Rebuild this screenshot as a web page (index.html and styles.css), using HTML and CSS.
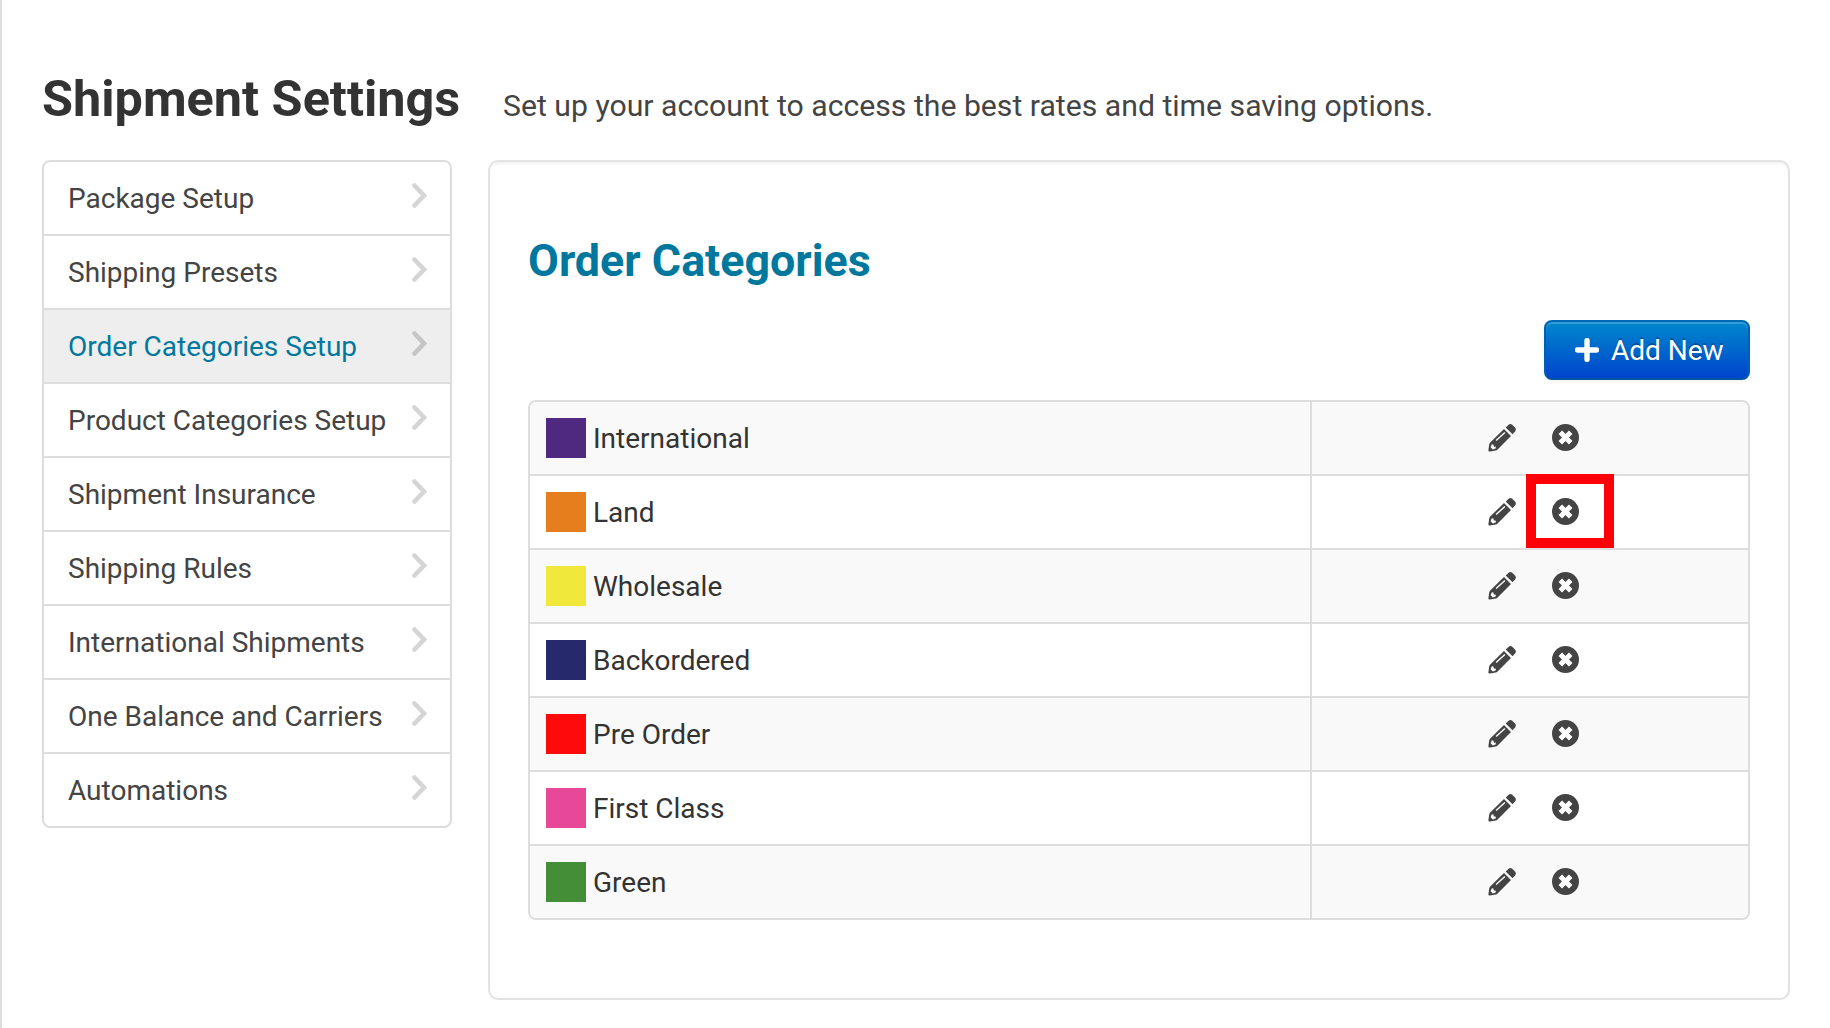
FILE: index.html
```html
<!DOCTYPE html>
<html lang="en">
<head>
  <meta charset="UTF-8" />
  <meta name="viewport" content="width=device-width, initial-scale=1.0"/>
  <title>Shipment Settings</title>
  <link rel="stylesheet" href="styles.css">
</head>
<body>
  <svg class="icon-defs" width="0" height="0">
    <symbol id="icon-chevron" viewBox="0 0 15 25">
      <path d="M2.5 2.5 L12 12.5 L2.5 22.5" fill="none" stroke="currentColor" stroke-width="4.6" stroke-linecap="round" />
    </symbol>
    <symbol id="icon-plus" viewBox="0 0 24 24">
      <path d="M12 2.5V21.5M2.5 12H21.5" fill="none" stroke="currentColor" stroke-width="5.4" stroke-linecap="round" />
    </symbol>
    <symbol id="icon-pencil" viewBox="0 0 28 28">
      <path fill="currentColor" fill-rule="evenodd" d="M16 5 L23 12 L9.6 25.4 Q8.8 26.2 7.8 26.6 L2 27.6 Q.2 27.8 .4 26.2 L1.2 20.6 Q1.4 19.4 2.2 18.6 Z M7.6 16 L8.6 17 L17.4 9 L16.4 8 Z M3.8 20.2 L2.6 23.2 L4.8 25.4 L7.6 24.6 L8 22.8 L5.9 22.6 L5.4 20.4 Z" />
      <path fill="currentColor" d="M17.7 3.5 L20.4 .9 Q22.2 -.6 24.2 .8 L27 3.6 Q28.6 5.4 27.2 7.2 L24.5 10.2 Z" />
    </symbol>
    <symbol id="icon-remove" viewBox="0 0 27 27">
      <circle cx="13.5" cy="13.5" r="13.5" fill="currentColor" />
      <path class="icon-cross" d="M8.3 8.3 L18.7 18.7 M18.7 8.3 L8.3 18.7" />
    </symbol>
  </svg>

  <div class="page">
    <div class="page-header">
      <h1>Shipment Settings</h1>
      <p>Set up your account to access the best rates and time saving options.</p>
    </div>

    <div class="content">
      <ul class="side-nav">
        <li><a>Package Setup</a><svg class="chevron"><use href="#icon-chevron" /></svg></li>
        <li><a>Shipping Presets</a><svg class="chevron"><use href="#icon-chevron" /></svg></li>
        <li class="active"><a>Order Categories Setup</a><svg class="chevron"><use href="#icon-chevron" /></svg></li>
        <li><a>Product Categories Setup</a><svg class="chevron"><use href="#icon-chevron" /></svg></li>
        <li><a>Shipment Insurance</a><svg class="chevron"><use href="#icon-chevron" /></svg></li>
        <li><a>Shipping Rules</a><svg class="chevron"><use href="#icon-chevron" /></svg></li>
        <li><a>International Shipments</a><svg class="chevron"><use href="#icon-chevron" /></svg></li>
        <li><a>One Balance and Carriers</a><svg class="chevron"><use href="#icon-chevron" /></svg></li>
        <li><a>Automations</a><svg class="chevron"><use href="#icon-chevron" /></svg></li>
      </ul>

      <div class="panel">
        <h2>Order Categories</h2>
        <div class="toolbar">
          <button type="button" class="btn-add"><svg class="plus"><use href="#icon-plus" /></svg><span>Add New</span></button>
        </div>

        <div class="category-list">
          <div class="category">
            <div class="name"><span class="swatch purple"></span><span class="label">International</span></div>
            <div class="actions"><svg class="pencil"><use href="#icon-pencil" /></svg><svg class="remove"><use href="#icon-remove" /></svg></div>
          </div>
          <div class="category">
            <div class="name"><span class="swatch orange"></span><span class="label">Land</span></div>
            <div class="actions highlighted"><svg class="pencil"><use href="#icon-pencil" /></svg><svg class="remove"><use href="#icon-remove" /></svg></div>
          </div>
          <div class="category">
            <div class="name"><span class="swatch yellow"></span><span class="label">Wholesale</span></div>
            <div class="actions"><svg class="pencil"><use href="#icon-pencil" /></svg><svg class="remove"><use href="#icon-remove" /></svg></div>
          </div>
          <div class="category">
            <div class="name"><span class="swatch navy"></span><span class="label">Backordered</span></div>
            <div class="actions"><svg class="pencil"><use href="#icon-pencil" /></svg><svg class="remove"><use href="#icon-remove" /></svg></div>
          </div>
          <div class="category">
            <div class="name"><span class="swatch red"></span><span class="label">Pre Order</span></div>
            <div class="actions"><svg class="pencil"><use href="#icon-pencil" /></svg><svg class="remove"><use href="#icon-remove" /></svg></div>
          </div>
          <div class="category">
            <div class="name"><span class="swatch pink"></span><span class="label">First Class</span></div>
            <div class="actions"><svg class="pencil"><use href="#icon-pencil" /></svg><svg class="remove"><use href="#icon-remove" /></svg></div>
          </div>
          <div class="category">
            <div class="name"><span class="swatch green"></span><span class="label">Green</span></div>
            <div class="actions"><svg class="pencil"><use href="#icon-pencil" /></svg><svg class="remove"><use href="#icon-remove" /></svg></div>
          </div>
        </div>
      </div>
    </div>
  </div>
</body>
</html>
```

FILE: styles.css
```css
* {
  box-sizing: border-box;
}

body {
  margin: 0;
  font-family: Roboto, Arial, sans-serif;
  font-size: 28px;
  line-height: 40px;
  color: #333;
  background: #fff;
}

h1, h2, p, ul {
  margin: 0;
  padding: 0;
}

.icon-defs {
  position: absolute;
}

.page {
  height: 1028px;
  padding: 69px 40px 0;
  border-left: 2px solid #ddd;
}

.page-header {
  display: flex;
  align-items: baseline;
  height: 91px;
}

.page-header h1 {
  width: 461px;
  font-size: 50.4px;
  line-height: 60px;
  white-space: nowrap;
}

.page-header p {
  font-size: 30.2px;
  color: #444;
}

.content {
  display: flex;
  align-items: flex-start;
  gap: 36px;
}

.side-nav {
  width: 410px;
  border: 2px solid #ddd;
  border-radius: 8px;
  overflow: hidden;
  list-style: none;
  color: #444;
}

.side-nav li {
  display: flex;
  justify-content: space-between;
  height: 74px;
  padding: 17px 23px 0 24px;
  border-bottom: 2px solid #ddd;
}

.side-nav li:last-child {
  height: 72px;
  border-bottom: none;
}

.side-nav .active {
  color: #00789e;
  background: #eee;
}

.chevron {
  width: 15px;
  height: 25px;
  margin-top: 4px;
  color: #d5d5d5;
}

.active .chevron {
  color: #c6c6c6;
}

.panel {
  width: 1302px;
  height: 840px;
  padding: 69px 38px 0;
  border: 2px solid #e3e3e3;
  border-radius: 10px;
  box-shadow: inset 0 2px 2px rgba(0, 0, 0, 0.05);
}

.panel h2 {
  font-size: 44.8px;
  line-height: 60px;
  color: #00789e;
}

.toolbar {
  display: flex;
  justify-content: flex-end;
  padding: 29px 0 20px;
}

.btn-add {
  display: flex;
  align-items: center;
  gap: 12px;
  width: 206px;
  height: 60px;
  padding: 0 0 0 29px;
  font: 28px/40px Roboto, Arial, sans-serif;
  color: #fff;
  text-shadow: 0 -2px 0 rgba(0, 0, 0, 0.25);
  background: linear-gradient(#08c, #04c);
  border: 2px solid #0060b0;
  border-color: #0068b4 #0060b0 #0055a0;
  border-radius: 8px;
  box-shadow: inset 0 2px 0 rgba(255, 255, 255, 0.2), 0 2px 4px rgba(0, 0, 0, 0.05);
}

.btn-add span {
  padding-top: 2px;
}

.plus {
  width: 24px;
  height: 24px;
}

.category-list {
  border: 2px solid #ddd;
  border-radius: 8px;
  overflow: hidden;
}

.category {
  display: flex;
  height: 74px;
  border-bottom: 2px solid #ddd;
}

.category:last-child {
  height: 72px;
  border-bottom: none;
}

.category:nth-child(odd) {
  background: #f9f9f9;
}

.name {
  display: flex;
  gap: 7px;
  width: 780px;
  padding: 16px;
}

.label {
  padding-top: 1px;
}

.swatch {
  width: 40px;
  height: 40px;
}

.purple { background: #4f297f; }
.orange { background: #e77e1e; }
.yellow { background: #f0e83b; }
.navy { background: #27296d; }
.red { background: #ff0a0a; }
.pink { background: #e84898; }
.green { background: #438e37; }

.actions {
  position: relative;
  display: flex;
  flex: 1;
  gap: 36px;
  padding: 22px 0 0 176px;
  border-left: 2px solid #ddd;
  color: #444;
}

.pencil {
  width: 28px;
  height: 28px;
}

.remove {
  width: 27px;
  height: 27px;
}

.icon-cross {
  stroke: #fff;
  stroke-width: 5;
}

/* callout around the delete button */
.highlighted::after {
  content: "";
  position: absolute;
  box-sizing: border-box;
  top: -2px;
  left: 214px;
  width: 88px;
  height: 74px;
  border: 10px solid #ff0008;
}
```
